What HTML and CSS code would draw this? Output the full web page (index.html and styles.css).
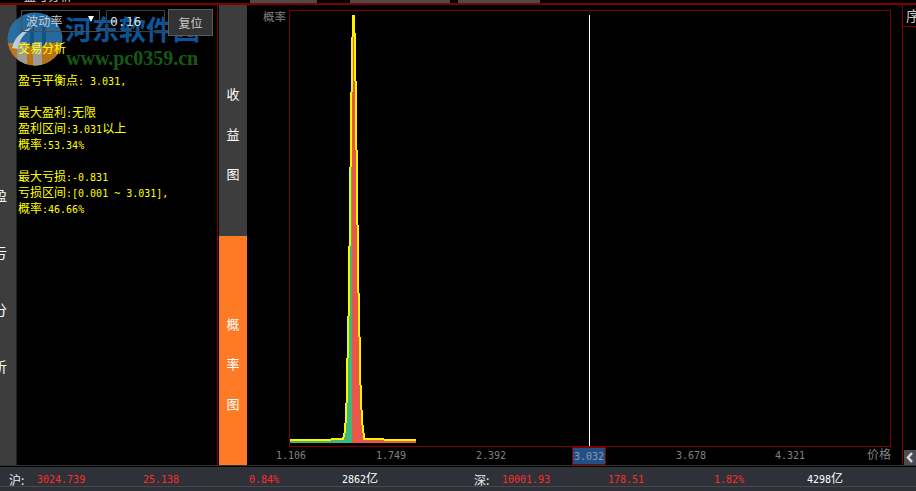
FILE: index.html
```html
<!DOCTYPE html>
<html lang="zh-CN">
<head>
<meta charset="utf-8">
<title>盈亏分析</title>
<link rel="stylesheet" href="styles.css">
</head>
<body>
<div class="top-tabs">
  <div class="tab-title">盈亏分析</div>
  <div class="tab tab-a"></div>
  <div class="tab tab-b"></div>
  <div class="tab tab-c"></div>
</div>
<main class="main">
  <aside class="side">
    <span>盈</span><span>亏</span><span>分</span><span>析</span>
  </aside>
  <section class="panel">
    <div class="controls">
      <div class="select">波动率<i class="caret"></i></div>
      <div class="input">0.16</div>
      <div class="button">复位</div>
    </div>
    <div class="report">
      <div>交易分析</div>
      <div></div>
      <div>盈亏平衡点<span class="n">: 3.031,</span></div>
      <div></div>
      <div>最大盈利<span class="n">:</span>无限</div>
      <div>盈利区间<span class="n">:3.031</span>以上</div>
      <div>概率<span class="n">:53.34%</span></div>
      <div></div>
      <div>最大亏损<span class="n">:-0.831</span></div>
      <div>亏损区间<span class="n">:[0.001 ~ 3.031],</span></div>
      <div>概率<span class="n">:46.66%</span></div>
    </div>
  </section>
  <nav class="tabs">
    <div class="vtab vtab-grey"><span>收</span><span>益</span><span>图</span></div>
    <div class="vtab vtab-orange"><span>概</span><span>率</span><span>图</span></div>
  </nav>
  <section class="chart">
    <div class="chart-row">
      <div class="y-title">概率</div>
      <div class="plot">
        <svg class="plot-svg" viewBox="290 11 600 435" shape-rendering="crispEdges" aria-hidden="true">
          <polygon fill="#fff200" points="290,443 290,439 331,439 331,438 342,438 342,437 343,437 343,433 344,433 344,423 345,423 345,403 346,403 346,358 347,358 347,316 348,316 348,246 349,246 349,167 350,167 350,92 351,92 351,37 352,37 352,15 355,15 355,33 356,33 356,81 357,81 357,150 358,150 358,225 359,225 359,293 360,293 360,337 361,337 361,385 362,385 362,410 363,410 363,425 364,425 364,433 365,433 365,438 384,438 384,439 416,439 416,443"/>
          <polygon fill="#e8584a" points="352,443 352,92 353,92 353,37 354,37 354,81 355,81 355,150 356,150 356,225 357,225 357,293 358,293 358,337 359,337 359,385 360,385 360,410 361,410 361,425 362,425 362,433 363,433 363,440 384,440 384,441 416,441 416,443"/>
          <polygon fill="#3cb87e" points="290,443 290,441 331,441 331,440 344,440 344,437 345,437 345,433 346,433 346,423 347,423 347,403 348,403 348,358 349,358 349,316 350,316 350,246 351,246 351,167 352,167 352,443"/>
          <rect x="589" y="15" width="1" height="431" fill="#ffffff"/>
        </svg>
      </div>
    </div>
    <div class="axis">
      <span class="tick">1.106</span>
      <span class="tick">1.749</span>
      <span class="tick">2.392</span>
      <span class="tick tick-current">3.032</span>
      <span class="tick">3.678</span>
      <span class="tick tick-last">4.321</span>
      <span class="tick-unit">价格</span>
    </div>
  </section>
  <aside class="right">
    <div class="right-head">序</div>
    <div class="collapse">
      <svg viewBox="0 0 12 15" width="12" height="15" aria-hidden="true"><path d="M8 3 L4 7.500 L8 12" fill="none" stroke="#d8d8e0" stroke-width="2.500"/></svg>
    </div>
  </aside>
</main>
<footer class="status">
  <div class="market">
    <span class="m-label">沪:</span><span class="m-val">3024.739</span><span class="m-val">25.138</span><span class="m-pct">0.84%</span><span class="m-amt">2862<b>亿</b></span>
  </div>
  <div class="market">
    <span class="m-label">深:</span><span class="m-val">10001.93</span><span class="m-val">178.51</span><span class="m-pct">1.82%</span><span class="m-amt">4298<b>亿</b></span>
  </div>
</footer>
<div class="watermark">
  <svg class="wm-logo" viewBox="0 0 56 54" aria-hidden="true">
    <defs><clipPath id="disc"><ellipse cx="28" cy="27" rx="27.500" ry="26.500"/></clipPath></defs>
    <g clip-path="url(#disc)">
      <rect width="56" height="54" fill="#2a73ab"/>
      <rect y="31" width="56" height="23" fill="#c97c18"/>
      <rect x="10" y="30" width="10" height="24" fill="#a9a9a4"/>
      <rect x="26" y="30" width="9" height="24" fill="#a9a9a4"/>
      <rect x="23" y="14" width="4" height="20" fill="#155b92"/>
      <rect x="35" y="14" width="4" height="20" fill="#155b92"/>
      <path d="M5 36 C8 24 16 18 26 15 C18 21 12 27 11 37 Z" fill="#cfdde6"/>
    </g>
  </svg>
  <div class="wm-name">河东软件园</div>
  <div class="wm-url">www.pc0359.cn</div>
</div>
</body>
</html>
```

FILE: styles.css
```css
* { box-sizing: border-box; }
html, body { margin: 0; height: 100%; }
body {
  width: 916px;
  height: 491px;
  overflow: hidden;
  background: #000;
  color: #fff;
  font-family: "Noto Sans CJK SC", "Liberation Sans", sans-serif;
  font-size: 12px;
  display: flex;
  flex-direction: column;
  position: relative;
}

/* top strip */
.top-tabs {
  height: 5px;
  flex: none;
  display: flex;
  align-items: flex-start;
  border-bottom: 2px solid #800000;
  overflow: hidden;
  background: #000;
}
.tab-title {
  width: 250px;
  height: 3px;
  padding-left: 24px;
  font-size: 12px;
  line-height: 14px;
  color: #ddd;
  display: flex;
  align-items: flex-end;
  overflow: hidden;
  flex: none;
}
.tab { height: 3px; background: #4a4a4a; flex: none; }
.tab-a { width: 67px; }
.tab-b { width: 100px; margin-left: 33px; }
.tab-c { width: 82px; margin-left: 8px; }

/* main row */
.main { flex: none; height: 460px; display: flex; }

.side {
  width: 17px;
  flex: none;
  background: #3d3d3d;
  border-right: 1px solid #222;
  overflow: hidden;
  display: flex;
  flex-direction: column;
  gap: 43px;
  padding-top: 183px;
}
.side span {
  display: block;
  width: 14px;
  margin-left: -7px;
  font-size: 14px;
  line-height: 14px;
  color: #fff;
}

.panel {
  width: 201px;
  flex: none;
  border-right: 1px solid #800000;
  padding-top: 4px;
}
.controls {
  position: relative;
  z-index: 3;
  display: flex;
  align-items: flex-start;
  height: 27px;
  padding-left: 4px;
}
.select {
  width: 79px;
  height: 22px;
  margin-top: 1px;
  border: 1px solid #4c4c4c;
  padding-left: 4px;
  line-height: 20px;
  color: #ccc;
  display: flex;
  align-items: center;
  letter-spacing: 0.3px;
}
.caret {
  margin-left: auto;
  margin-right: 5px;
  margin-top: -4px;
  width: 0;
  height: 0;
  border-left: 3px solid transparent;
  border-right: 3px solid transparent;
  border-top: 6px solid #fff;
}
.input {
  width: 59px;
  height: 22px;
  margin-top: 1px;
  margin-left: 6px;
  border: 1px solid #3c3c3c;
  padding-left: 3px;
  font-family: "DejaVu Sans Mono", monospace;
  font-size: 13px;
  line-height: 22px;
  color: #ddd;
}
.button {
  width: 45px;
  height: 27px;
  margin-left: 3px;
  border: 1px solid #5a5a5a;
  background: #333;
  color: #ccc;
  text-align: center;
  line-height: 25px;
}
.report {
  position: relative;
  z-index: 3;
  margin-top: 4px;
  padding-left: 1px;
  color: #ffff00;
  font-size: 12px;
  line-height: 16px;
}
.report > div { height: 16px; white-space: nowrap; }
.n {
  font-family: "DejaVu Sans Mono", monospace;
  font-size: 10px;
  line-height: 1;
}

/* vertical tabs */
.tabs {
  width: 28px;
  flex: none;
  margin-left: 1px;
  display: flex;
  flex-direction: column;
}
.vtab {
  display: flex;
  flex-direction: column;
  align-items: center;
  font-size: 13px;
  line-height: 40px;
  color: #fff;
}
.vtab span { display: block; height: 40px; }
.vtab-grey { height: 231px; background: #3d3d3d; padding-top: 69px; }
.vtab-orange { flex: 1; background: #ff7a25; padding-top: 68px; }

/* chart */
.chart {
  width: 655px;
  flex: none;
  display: flex;
  flex-direction: column;
  padding-top: 5px;
}
.chart-row { display: flex; height: 437px; flex: none; }
.y-title {
  width: 42px;
  flex: none;
  padding-left: 16px;
  color: #808080;
  font-size: 11.500px;
  line-height: 13px;
}
.plot {
  width: 602px;
  flex: none;
  border: 1px solid #800000;
}
.plot-svg { display: block; width: 600px; height: 435px; }

.axis {
  height: 18px;
  flex: none;
  display: grid;
  grid-template-columns: repeat(6, 100px) auto;
  padding-left: 29px;
  color: #808080;
  font-family: "DejaVu Sans Mono", monospace;
  font-size: 10px;
  line-height: 17px;
}
.tick { display: block; }
.tick-current {
  justify-self: start;
  width: 34px;
  height: 18px;
  margin-left: -4px;
  border: 1px solid #800000;
  background: #234f87;
  text-align: center;
  line-height: 17px;
  color: #8d97a5;
}
.tick-last { margin-left: -1px; }
.tick-unit {
  margin-left: -9px;
  font-family: "Noto Sans CJK SC", sans-serif;
  font-size: 12px;
  line-height: 14px;
  white-space: nowrap;
}

/* right rail */
.right {
  width: 14px;
  flex: none;
  border-left: 1px solid #800000;
  display: flex;
  flex-direction: column;
  overflow: hidden;
}
.right-head {
  height: 22px;
  flex: none;
  border-bottom: 1px solid #800000;
  padding-left: 3px;
  font-size: 14px;
  line-height: 20px;
  color: #ccc;
  white-space: nowrap;
  overflow: hidden;
}
.collapse {
  margin-top: auto;
  margin-left: 1px;
  width: 12px;
  height: 15px;
  background: #4a4d55;
  display: flex;
}

/* status */
.status {
  flex: none;
  height: 26px;
  border-top: 1px solid #333;
  display: flex;
  background: linear-gradient(#000 0 1px, #2e3238 1px);
  padding-top: 6px;
  position: relative;
}
.status::after {
  content: "";
  position: absolute;
  left: 0;
  right: 0;
  bottom: 4px;
  height: 1px;
  background: #45484e;
}
.market {
  width: 465px;
  height: 19px;
  flex: none;
  padding-left: 9px;
  display: flex;
  line-height: 15px;
  white-space: nowrap;
}
.market span {
  font-family: "DejaVu Sans Mono", monospace;
  font-size: 10px;
  display: block;
  flex: none;
}
.market b {
  font-family: "Noto Sans CJK SC", sans-serif;
  font-size: 12px;
  font-weight: 400;
  line-height: 1;
}
.market .m-label {
  width: 28px;
  font-family: "Noto Sans CJK SC", sans-serif;
  font-size: 12px;
  color: #eee;
}
.market .m-val { width: 106px; color: #ff2a2a; }
.market .m-pct { width: 93px; color: #ff2a2a; }
.market .m-amt { color: #fff; }

/* watermark */
.watermark {
  position: absolute;
  left: 7px;
  top: 12px;
  width: 200px;
  height: 56px;
  z-index: 2;
  pointer-events: none;
}
.wm-logo {
  position: absolute;
  left: 0;
  top: 0;
  width: 56px;
  height: 54px;
  opacity: 0.92;
}
.wm-name {
  position: absolute;
  left: 58px;
  top: 0;
  font-size: 27px;
  line-height: 34px;
  font-weight: 700;
  color: #0b5596;
  white-space: nowrap;
}
.wm-url {
  position: absolute;
  left: 59px;
  top: 36px;
  font-family: "Liberation Serif", serif;
  font-size: 20px;
  line-height: 20px;
  font-weight: 700;
  color: #145a14;
  white-space: nowrap;
}
```
